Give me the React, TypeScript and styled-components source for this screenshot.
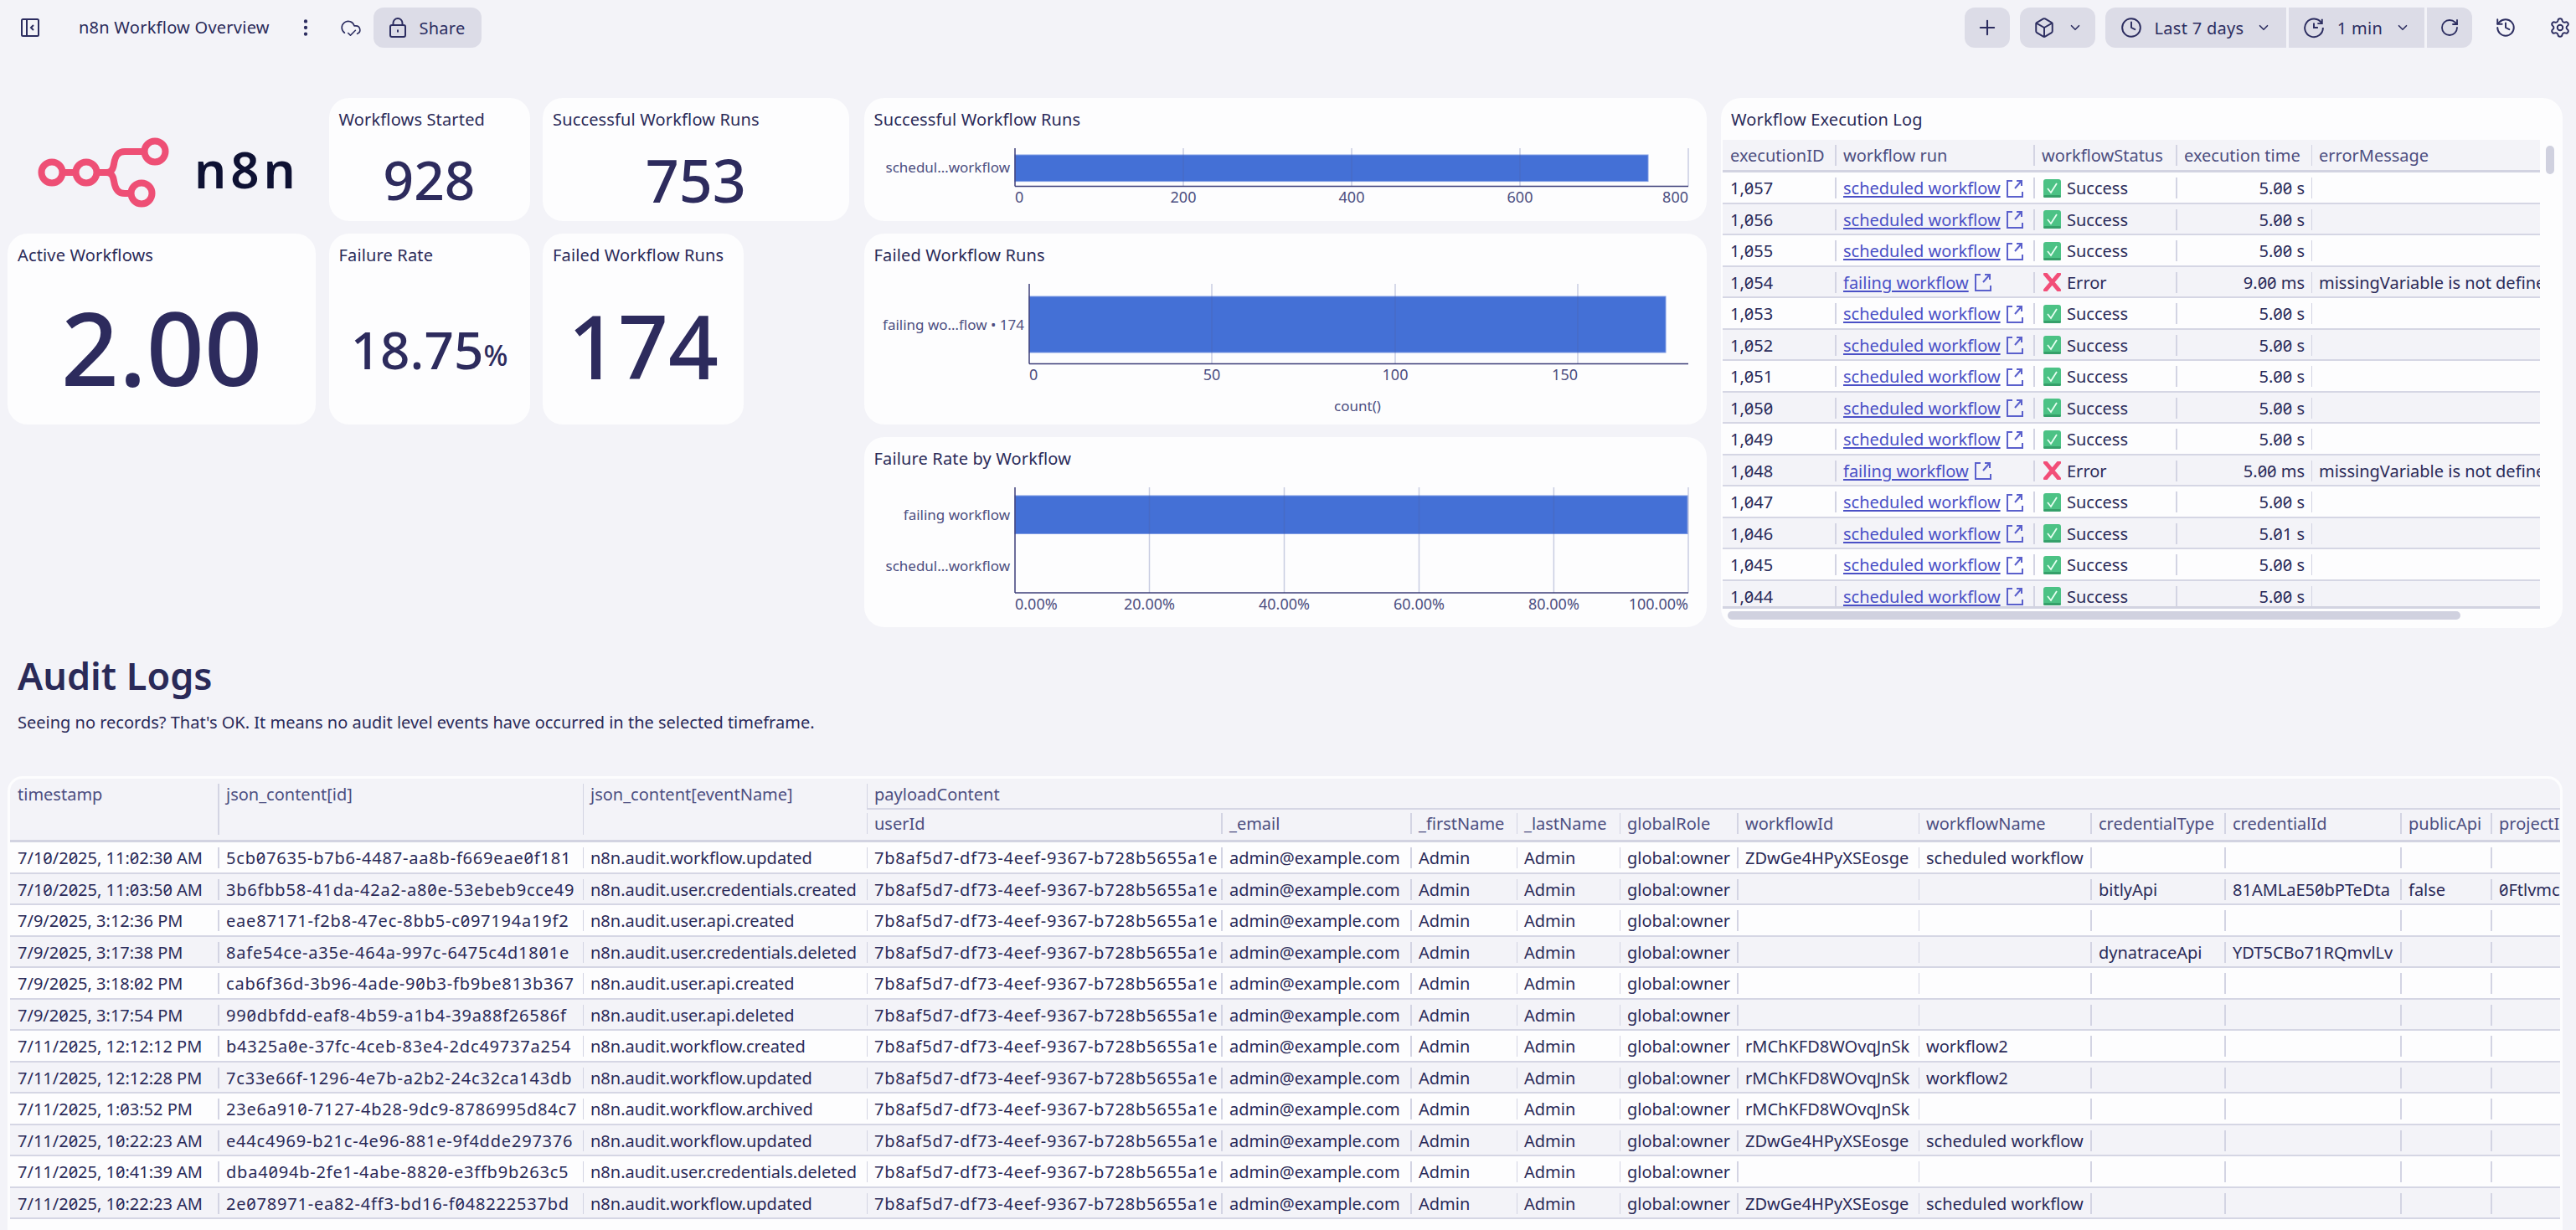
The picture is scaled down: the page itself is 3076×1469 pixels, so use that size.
import React from 'react';
import styled, { createGlobalStyle } from 'styled-components';
import { ChevronDown, Plus, Box, Clock, RotateCw, History, Settings, EllipsisVertical, CloudCheck } from 'lucide-react';

const GlobalStyle = createGlobalStyle`
  html, body {
    margin: 0;
    background: #f3f3f8;
    font-family: "Noto Sans", "Open Sans", sans-serif;
    color: #2a2a58;
  }
  * { box-sizing: border-box; }
`;

const Page = styled.div`
  width: 3076px;
  height: 1469px;
  overflow: hidden;
  display: flex;
  flex-direction: column;
`;

const Toolbar = styled.header`
  height: 117px;
  flex: none;
  padding: 9px 4px 0 20px;
  display: flex;
  align-items: flex-start;
`;

const ToolGroup = styled.div<{ $gap?: number; $push?: boolean }>`
  display: flex;
  align-items: center;
  gap: ${p => p.$gap ?? 0}px;
  margin-left: ${p => (p.$push ? 'auto' : '0')};
`;

const IconSlot = styled.span<{ $w?: number; $mr?: number; $ml?: number }>`
  width: ${p => p.$w ?? 48}px;
  height: 48px;
  margin: 0 ${p => p.$mr ?? 0}px 0 ${p => p.$ml ?? 0}px;
  display: flex;
  align-items: center;
  justify-content: center;
  color: #2c2d60;
`;

const BoardTitle = styled.span`
  font-size: 20px;
  letter-spacing: 0.25px;
  line-height: 48px;
  width: 226px;
  margin: 0 29px 0 42px;
  white-space: nowrap;
  color: #2a2a58;
`;

const ToolButton = styled.button<{ $w: number; $side?: string }>`
  width: ${p => p.$w}px;
  height: 48px;
  border: 0;
  padding: 0;
  background: #dcdce7;
  color: #2c2d60;
  font: 20px "Noto Sans", sans-serif;
  letter-spacing: 0.3px;
  display: flex;
  align-items: center;
  justify-content: center;
  gap: 15px;
  border-radius: ${p =>
    p.$side === 'left' ? '12px 0 0 12px' : p.$side === 'right' ? '0 12px 12px 0' : p.$side === 'mid' ? '0' : '12px'};
`;

const Top = styled.section`
  height: 633px;
  padding: 0 16px 0 9px;
  display: flex;
  justify-content: space-between;
  flex: none;
`;

const KpiGrid = styled.div`
  width: 1005px;
  display: grid;
  grid-template-columns: 368px 240px 240px 110px;
  grid-template-rows: 147px 228px;
  column-gap: 15.5px;
  row-gap: 15px;
`;

const Tile = styled.div<{ $span?: number }>`
  background: #fdfdfe;
  border-radius: 24px;
  grid-column: span ${p => p.$span ?? 1};
  display: flex;
  flex-direction: column;
  min-width: 0;
  overflow: hidden;
`;

const LogoTile = styled.div`
  display: flex;
  align-items: center;
  gap: 25px;
  padding: 31px 0 0 34px;
`;

const LogoWord = styled.span`
  font-size: 60px;
  font-weight: 600;
  letter-spacing: 5px;
  color: #0e1133;
  line-height: 1;
  padding-bottom: 9px;
`;

const TileTitle = styled.div`
  font-size: 20px;
  font-weight: 450;
  letter-spacing: 0.15px;
  height: 48px;
  flex: none;
  padding: 12px 12px 0;
  line-height: 28px;
  color: #2a2a58;
  white-space: nowrap;
`;

const KpiValue = styled.div<{ $size: number; $weight?: number; $pb?: number }>`
  flex: 1;
  display: flex;
  align-items: center;
  justify-content: center;
  font-size: ${p => p.$size}px;
  font-weight: ${p => p.$weight ?? 500};
  line-height: 1;
  color: #2d2b5d;
  padding-bottom: ${p => p.$pb ?? 0}px;
  white-space: nowrap;
`;

const Unit = styled.span`
  font-size: 34px;
  padding-top: 14px;
`;

const ChartColumn = styled.div`
  width: 1006px;
  display: grid;
  grid-template-rows: 147px 228px 227px;
  row-gap: 15px;
`;

const ChartSvg = styled.svg`
  display: block;
  font-family: "Noto Sans", sans-serif;
`;

const Glyph = styled.svg<{ $ml?: number }>`
  flex: none;
  margin-left: ${p => p.$ml ?? 0}px;
`;

const LogTile = styled(Tile)`
  width: 1005px;
  height: 633px;
`;

const LogBody = styled.div`
  display: flex;
  height: 562px;
  flex: none;
  padding: 2px 0 0 2px;
`;

const LogScroller = styled.div`
  width: 976px;
  height: 560px;
  overflow: hidden;
  flex: none;
  border-bottom: 3px solid #d2d3e1;
`;

const ScrollThumbV = styled.div`
  width: 10px;
  height: 34px;
  margin: 7px 0 0 7px;
  border-radius: 5px;
  background: #d0d1df;
`;

const ScrollThumbH = styled.div`
  width: 875px;
  height: 10px;
  margin: 3px 0 0 8px;
  border-radius: 5px;
  background: #d0d1df;
  flex: none;
`;

const Table = styled.table<{ $w: number }>`
  width: ${p => p.$w}px;
  border-collapse: separate;
  border-spacing: 0;
  table-layout: fixed;
  font-size: 20px;
  font-variant-numeric: slashed-zero;
`;

const Row = styled.tr<{ $alt?: boolean }>`
  height: 37.5px;
  background: ${p => (p.$alt ? '#f3f3f8' : '#fdfdfe')};
`;

const HeadRow = styled.tr`
  background: #f3f3f8;
`;

const BodyCell = styled.td`
  padding: 0;
  height: 37.5px;
  border-bottom: 2px solid #d5d6e4;
`;

const HeadCell = styled.th<{ $rule?: boolean; $h: number }>`
  padding: 0;
  height: ${p => p.$h}px;
  font-weight: 400;
  text-align: left;
  vertical-align: top;
  border-bottom: ${p => (p.$rule ? '3px solid #d2d3e1' : '0')};
`;

const CellInner = styled.div<{ $sep?: number; $right?: boolean; $tall?: number; $top?: number; $spaced?: boolean }>`
  height: ${p => p.$tall ?? 25}px;
  margin-top: ${p => p.$top ?? 6}px;
  margin-bottom: 4.5px;
  border-left: ${p => p.$sep ?? 0}px solid #d3d4e3;
  padding: 0 8px 0 ${p => (p.$sep ? 8 : 9)}px;
  line-height: 25px;
  letter-spacing: ${p => (p.$spaced ? '0.8px' : '0')};
  white-space: nowrap;
  overflow: hidden;
  display: flex;
  align-items: center;
  gap: 7px;
  justify-content: ${p => (p.$right ? 'flex-end' : 'flex-start')};
  color: #2a2a58;
`;

const HeadLabel = styled(CellInner)`
  color: #4c4e80;
  align-items: flex-start;
`;

const PayloadLabel = styled(HeadLabel)`
  margin-bottom: 0;
  border-bottom: 2px solid #d5d6e4;
`;

const RunLink = styled.a`
  color: #4a50c6;
  text-decoration: underline;
  text-decoration-thickness: 2px;
  text-underline-offset: 2px;
`;

const AuditHeading = styled.section`
  padding: 27px 0 0 21px;
  height: 177px;
  flex: none;
`;

const Heading = styled.h2`
  margin: 0;
  font-size: 45px;
  font-weight: 600;
  line-height: 60px;
  color: #2a2a58;
`;

const Lead = styled.p`
  margin: 12px 0 0;
  font-size: 20px;
  line-height: 28px;
  color: #2a2a58;
`;

const AuditTile = styled.div`
  margin: 0 16px 0 9px;
  border: 3px solid #fdfdfe;
  border-bottom: 0;
  border-radius: 18px 18px 0 0;
  background: #fdfdfe;
  overflow: hidden;
  flex: 1;
`;

type BarChartProps = {
  height: number;
  left: number;
  top: number;
  axis: number;
  bar: [number, number];
  barEnd: number;
  grid: number[];
  ticks: { x: number; t: string; a?: 'start' | 'end' }[];
  tickY: number;
  labels: { y: number; t: string }[];
  axisTitle?: { x: number; y: number; t: string };
};

const BarChart = ({ height, left, top, axis, bar, barEnd, grid, ticks, tickY, labels, axisTitle }: BarChartProps) => (
  <ChartSvg width={1006} height={height}>
    <rect x={left} y={bar[0]} width={barEnd - left} height={bar[1] - bar[0]} fill="#4470d6" stroke="#7e9be3" strokeWidth={1} />
    {grid.map(x => (
      <line key={x} x1={x} x2={x} y1={top} y2={axis} stroke="#50609f" strokeOpacity={0.3} strokeWidth={1.5} />
    ))}
    <line x1={left} x2={left} y1={top} y2={axis} stroke="#3c3e78" strokeWidth={1.5} />
    <line x1={left} x2={984} y1={axis} y2={axis} stroke="#3c3e78" strokeWidth={1.5} />
    {ticks.map(k => (
      <text key={k.t} x={k.x} y={tickY + 6} textAnchor={k.a ?? 'middle'} fontSize={18} fill="#4c4e80">{k.t}</text>
    ))}
    {labels.map(l => (
      <text key={l.t} x={left - 6} y={l.y + 6} textAnchor="end" fontSize={17} fill="#4c4e80">{l.t}</text>
    ))}
    {axisTitle && (
      <text x={axisTitle.x} y={axisTitle.y + 6} textAnchor="middle" fontSize={17} fill="#4c4e80">{axisTitle.t}</text>
    )}
  </ChartSvg>
);

const N8nLogo = () => (
  <Glyph width={164} height={84} viewBox="0 0 164 84" fill="none" stroke="#ee4f75" strokeWidth={8}>
    <circle cx={19} cy={42} r={12.5} />
    <circle cx={60} cy={42} r={12.5} />
    <circle cx={142} cy={17} r={12.5} />
    <circle cx={126} cy={67} r={12.5} />
    <path d="M31.5 42H47.5M72.5 42H84C90 42 92 38 93 32C94.5 22 98 17 106 17H129.5M84 42C90 42 92 46 93 52C94.5 62 98 67 106 67H113.5" />
  </Glyph>
);

const SidebarIcon = () => (
  <Glyph width={22} height={22} viewBox="0 0 22 22" fill="none" stroke="#2c2d60" strokeWidth={2}>
    <rect x={1} y={1} width={20} height={20} rx={1.5} />
    <path d="M7 1V21" />
    <path d="M15 8l-3 3 3 3" />
  </Glyph>
);

const LockIcon = () => (
  <Glyph width={20} height={24} viewBox="0 0 20 24" fill="none" stroke="#2c2d60" strokeWidth={2}>
    <rect x={1} y={9} width={18} height={14} rx={2} />
    <path d="M4.5 9V6.5a5.5 5.5 0 0 1 11 0V9" />
    <path d="M10 14.5v3" />
  </Glyph>
);

const ClockRefreshIcon = () => (
  <Glyph width={26} height={26} viewBox="0 0 24 24" fill="none" stroke="#2c2d60" strokeWidth={1.8}>
    <path d="M20.5 7A10 10 0 1 0 22 12" />
    <path d="M21 2.5V7.5H16" />
    <path d="M12 7v5h4.5" />
  </Glyph>
);

const ExternalIcon = () => (
  <Glyph width={20} height={22} viewBox="0 0 20 22" fill="none" stroke="#5a60cc" strokeWidth={2}>
    <path d="M7 2H1V21H19V15" />
    <path d="M10 11L17 3M12 2H18V8" />
  </Glyph>
);

const SuccessIcon = () => (
  <Glyph $ml={2} width={21} height={22} viewBox="0 0 21 22">
    <rect x={0} y={0} width={21} height={22} rx={3} fill="#4cc285" />
    <rect x={0} y={19} width={21} height={3} rx={1.5} fill="#35a06a" />
    <path d="M5 11l4 5 7-11" fill="none" stroke="#e8fff2" strokeWidth={1.8} />
  </Glyph>
);

const ErrorIcon = () => (
  <Glyph $ml={2} width={21} height={22} viewBox="0 0 21 22">
    <path d="M2.5 1.5L18.5 20.5M18.5 1.5L2.5 20.5" stroke="#f24e78" strokeWidth={5} strokeLinecap="round" />
  </Glyph>
);

const logColumns = [134, 237, 170, 162, 273];
const logSeps = [0, 2, 2, 2, 1];

const logRows: [string, number, string][] = [
  ['1,057', 1, '5.00 s'], ['1,056', 1, '5.00 s'], ['1,055', 1, '5.00 s'], ['1,054', 0, '9.00 ms'],
  ['1,053', 1, '5.00 s'], ['1,052', 1, '5.00 s'], ['1,051', 1, '5.00 s'], ['1,050', 1, '5.00 s'],
  ['1,049', 1, '5.00 s'], ['1,048', 0, '5.00 ms'], ['1,047', 1, '5.00 s'], ['1,046', 1, '5.01 s'],
  ['1,045', 1, '5.00 s'], ['1,044', 1, '5.00 s'],
];

const auditColumns = [248, 436, 339, 423, 226, 127, 123, 140, 217, 205, 160, 210, 108, 84];
const auditSeps = [0, 2, 1, 1, 2, 2, 1, 1, 2, 1, 2, 2, 2, 2];
const auditHead = ['userId', '_email', '_firstName', '_lastName', 'globalRole', 'workflowId', 'workflowName', 'credentialType', 'credentialId', 'publicApi', 'projectId'];
const uuidColumns = [1, 3];

const USER = '7b8af5d7-df73-4eef-9367-b728b5655a1e';
const SCHED = ['ZDwGe4HPyXSEosge', 'scheduled workflow'];
const WF2 = ['rMChKFD8WOvqJnSk', 'workflow2'];

const auditRows: string[][] = [
  ['7/10/2025, 11:02:30 AM', '5cb07635-b7b6-4487-aa8b-f669eae0f181', 'n8n.audit.workflow.updated', ...SCHED],
  ['7/10/2025, 11:03:50 AM', '3b6fbb58-41da-42a2-a80e-53ebeb9cce49', 'n8n.audit.user.credentials.created', '', '', 'bitlyApi', '81AMLaE50bPTeDta', 'false', '0Ftlvmcx'],
  ['7/9/2025, 3:12:36 PM', 'eae87171-f2b8-47ec-8bb5-c097194a19f2', 'n8n.audit.user.api.created'],
  ['7/9/2025, 3:17:38 PM', '8afe54ce-a35e-464a-997c-6475c4d1801e', 'n8n.audit.user.credentials.deleted', '', '', 'dynatraceApi', 'YDT5CBo71RQmvlLv'],
  ['7/9/2025, 3:18:02 PM', 'cab6f36d-3b96-4ade-90b3-fb9be813b367', 'n8n.audit.user.api.created'],
  ['7/9/2025, 3:17:54 PM', '990dbfdd-eaf8-4b59-a1b4-39a88f26586f', 'n8n.audit.user.api.deleted'],
  ['7/11/2025, 12:12:12 PM', 'b4325a0e-37fc-4ceb-83e4-2dc49737a254', 'n8n.audit.workflow.created', ...WF2],
  ['7/11/2025, 12:12:28 PM', '7c33e66f-1296-4e7b-a2b2-24c32ca143db', 'n8n.audit.workflow.updated', ...WF2],
  ['7/11/2025, 1:03:52 PM', '23e6a910-7127-4b28-9dc9-8786995d84c7', 'n8n.audit.workflow.archived', WF2[0]],
  ['7/11/2025, 10:22:23 AM', 'e44c4969-b21c-4e96-881e-9f4dde297376', 'n8n.audit.workflow.updated', ...SCHED],
  ['7/11/2025, 10:41:39 AM', 'dba4094b-2fe1-4abe-8820-e3ffb9b263c5', 'n8n.audit.user.credentials.deleted'],
  ['7/11/2025, 10:22:23 AM', '2e078971-ea82-4ff3-bd16-f048222537bd', 'n8n.audit.workflow.updated', ...SCHED],
];

const auditCells = (r: string[]) => {
  const [ts, id, ev, ...rest] = r;
  const tail = Array.from({ length: 6 }, (_, i) => rest[i] ?? '');
  return [ts, id, ev, USER, 'admin@example.com', 'Admin', 'Admin', 'global:owner', ...tail];
};

const Colgroup = ({ widths }: { widths: number[] }) => (
  <colgroup>
    {widths.map((w, i) => <col key={i} width={w} />)}
  </colgroup>
);

export default function App() {
  return (
    <Page>
      <GlobalStyle />
      <Toolbar>
        <ToolGroup>
          <IconSlot $w={32}><SidebarIcon /></IconSlot>
          <BoardTitle>n8n Workflow Overview</BoardTitle>
          <IconSlot $w={32}><EllipsisVertical size={26} /></IconSlot>
          <IconSlot $w={48} $ml={14} $mr={3}><CloudCheck size={26} strokeWidth={1.5} /></IconSlot>
          <ToolButton $w={129}><LockIcon />Share</ToolButton>
        </ToolGroup>
        <ToolGroup $push $gap={12}>
          <ToolButton $w={54}><Plus size={28} strokeWidth={1.8} /></ToolButton>
          <ToolButton $w={90}><Box size={26} strokeWidth={1.8} /><ChevronDown size={18} strokeWidth={2.2} /></ToolButton>
          <ToolGroup $gap={3}>
            <ToolButton $w={216} $side="left"><Clock size={26} strokeWidth={1.8} />Last 7 days<ChevronDown size={18} strokeWidth={2.2} /></ToolButton>
            <ToolButton $w={162} $side="mid"><ClockRefreshIcon />1 min<ChevronDown size={18} strokeWidth={2.2} /></ToolButton>
            <ToolButton $w={54} $side="right"><RotateCw size={24} strokeWidth={1.8} /></ToolButton>
          </ToolGroup>
          <ToolGroup $gap={22}>
            <IconSlot $w={56}><History size={26} strokeWidth={1.8} /></IconSlot>
            <IconSlot $w={30}><Settings size={26} strokeWidth={1.8} /></IconSlot>
          </ToolGroup>
        </ToolGroup>
      </Toolbar>

      <Top>
        <KpiGrid>
          <LogoTile>
            <N8nLogo />
            <LogoWord>n8n</LogoWord>
          </LogoTile>
          <Tile>
            <TileTitle>Workflows Started</TileTitle>
            <KpiValue $size={64}>928</KpiValue>
          </Tile>
          <Tile $span={2}>
            <TileTitle>Successful Workflow Runs</TileTitle>
            <KpiValue $size={70}>753</KpiValue>
          </Tile>
          <Tile>
            <TileTitle>Active Workflows</TileTitle>
            <KpiValue $size={121} $weight={550} $pb={6}>2.00</KpiValue>
          </Tile>
          <Tile>
            <TileTitle>Failure Rate</TileTitle>
            <KpiValue $size={62}>18.75<Unit>%</Unit></KpiValue>
          </Tile>
          <Tile>
            <TileTitle>Failed Workflow Runs</TileTitle>
            <KpiValue $size={105} $weight={550} $pb={10}>174</KpiValue>
          </Tile>
        </KpiGrid>

        <ChartColumn>
          <Tile>
            <TileTitle>Successful Workflow Runs</TileTitle>
            <BarChart
              height={99} left={180} top={12} axis={57.5} bar={[20, 51.6]} barEnd={936}
              grid={[381, 582, 783, 984]} tickY={70.5}
              ticks={[{ x: 180, t: '0', a: 'start' }, { x: 381, t: '200' }, { x: 582, t: '400' }, { x: 783, t: '600' }, { x: 984, t: '800', a: 'end' }]}
              labels={[{ y: 35, t: 'schedul…workflow' }]}
            />
          </Tile>
          <Tile>
            <TileTitle>Failed Workflow Runs</TileTitle>
            <BarChart
              height={180} left={197} top={12} axis={107.6} bar={[27, 94]} barEnd={957}
              grid={[415, 634, 852]} tickY={121}
              ticks={[{ x: 197, t: '0', a: 'start' }, { x: 415, t: '50' }, { x: 634, t: '100' }, { x: 852, t: '150', a: 'end' }]}
              labels={[{ y: 61, t: 'failing wo…flow • 174' }]}
              axisTitle={{ x: 589, y: 158, t: 'count()' }}
            />
          </Tile>
          <Tile>
            <TileTitle>Failure Rate by Workflow</TileTitle>
            <BarChart
              height={179} left={180} top={12} axis={138} bar={[22, 67.5]} barEnd={983}
              grid={[340.5, 501.5, 662.5, 823.4, 984]} tickY={152}
              ticks={[{ x: 180, t: '0.00%', a: 'start' }, { x: 340.5, t: '20.00%' }, { x: 501.5, t: '40.00%' }, { x: 662.5, t: '60.00%' }, { x: 823.4, t: '80.00%' }, { x: 984, t: '100.00%', a: 'end' }]}
              labels={[{ y: 45, t: 'failing workflow' }, { y: 106, t: 'schedul…workflow' }]}
            />
          </Tile>
        </ChartColumn>

        <LogTile>
          <TileTitle>Workflow Execution Log</TileTitle>
          <LogBody>
            <LogScroller>
              <Table $w={976}>
                <Colgroup widths={logColumns} />
                <thead>
                  <HeadRow>
                    {['executionID', 'workflow run', 'workflowStatus', 'execution time', 'errorMessage'].map((h, i) => (
                      <HeadCell key={h} $h={39} $rule>
                        <HeadLabel $sep={logSeps[i]}>{h}</HeadLabel>
                      </HeadCell>
                    ))}
                  </HeadRow>
                </thead>
                <tbody>
                  {logRows.map(([id, ok, time], i) => (
                    <Row key={id} $alt={i % 2 === 1}>
                      <BodyCell><CellInner>{id}</CellInner></BodyCell>
                      <BodyCell>
                        <CellInner $sep={2}>
                          <RunLink>{ok ? 'scheduled workflow' : 'failing workflow'}</RunLink>
                          <ExternalIcon />
                        </CellInner>
                      </BodyCell>
                      <BodyCell>
                        <CellInner $sep={2}>{ok ? <SuccessIcon /> : <ErrorIcon />}{ok ? 'Success' : 'Error'}</CellInner>
                      </BodyCell>
                      <BodyCell><CellInner $sep={2} $right>{time}</CellInner></BodyCell>
                      <BodyCell><CellInner $sep={1}>{ok ? '' : 'missingVariable is not defined'}</CellInner></BodyCell>
                    </Row>
                  ))}
                </tbody>
              </Table>
            </LogScroller>
            <ScrollThumbV />
          </LogBody>
          <ScrollThumbH />
        </LogTile>
      </Top>

      <AuditHeading>
        <Heading>Audit Logs</Heading>
        <Lead>Seeing no records? That's OK. It means no audit level events have occurred in the selected timeframe.</Lead>
      </AuditHeading>

      <AuditTile>
        <Table $w={3046}>
          <Colgroup widths={auditColumns} />
          <thead>
            <HeadRow>
              {['timestamp', 'json_content[id]', 'json_content[eventName]'].map((h, i) => (
                <HeadCell key={h} rowSpan={2} $h={76} $rule>
                  <HeadLabel $sep={auditSeps[i]} $tall={61}>{h}</HeadLabel>
                </HeadCell>
              ))}
              <HeadCell colSpan={11} $h={37}>
                <PayloadLabel $sep={1} $tall={31}>payloadContent</PayloadLabel>
              </HeadCell>
            </HeadRow>
            <HeadRow>
              {auditHead.map((h, i) => (
                <HeadCell key={h} $h={39} $rule>
                  <HeadLabel $sep={auditSeps[i + 3]} $top={4}>{h}</HeadLabel>
                </HeadCell>
              ))}
            </HeadRow>
          </thead>
          <tbody>
            {auditRows.map((r, i) => (
              <Row key={r[1]} $alt={i % 2 === 1}>
                {auditCells(r).map((c, j) => (
                  <BodyCell key={j}>
                    <CellInner $sep={auditSeps[j]} $spaced={uuidColumns.includes(j)}>{c}</CellInner>
                  </BodyCell>
                ))}
              </Row>
            ))}
          </tbody>
        </Table>
      </AuditTile>
    </Page>
  );
}
